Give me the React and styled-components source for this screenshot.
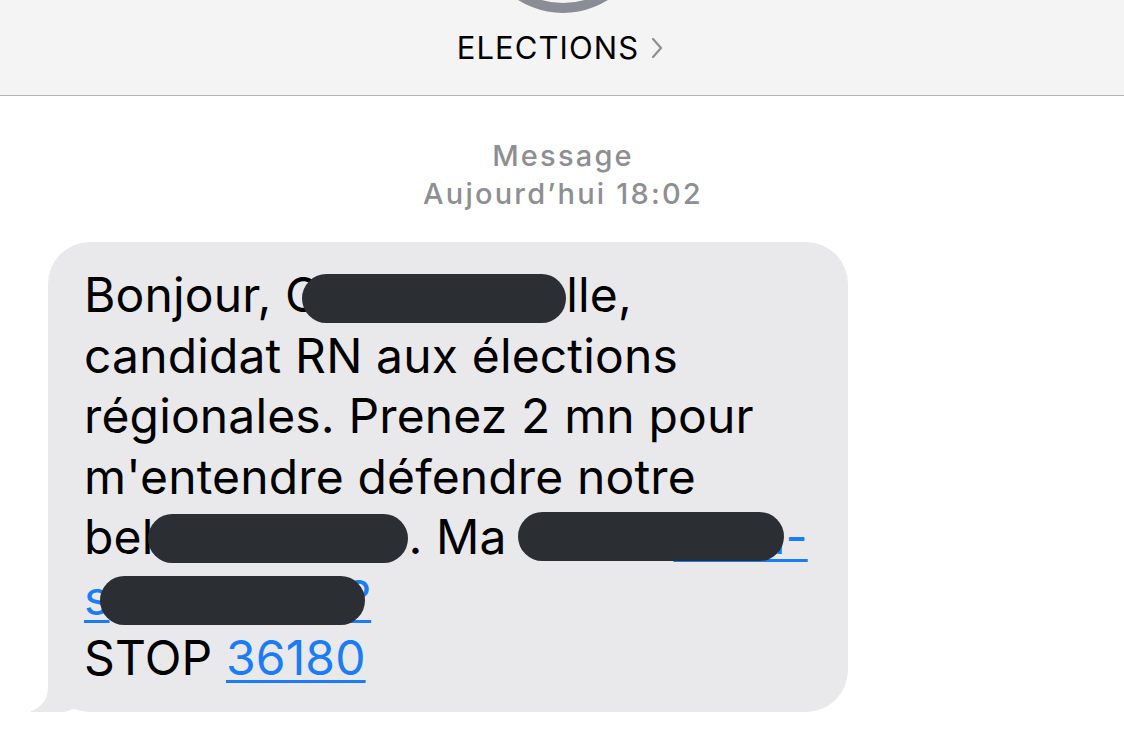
import React from "react";
import styled, {createGlobalStyle} from "styled-components";

const GlobalStyle = createGlobalStyle`
    html, body {
        margin: 0;
        padding: 0;
        background: #ffffff;
    }
    body {
        font-family: "Inter", "Liberation Sans", Arial, sans-serif;
        -webkit-font-smoothing: antialiased;
    }
`;

const Page = styled.div`
    width: 1124px;
    height: 755px;
    overflow: hidden;
    background: #ffffff;
`;

const Header = styled.header`
    height: 95px;
    background: #f4f4f4;
    border-bottom: 1px solid #b3b3b3;
    display: flex;
    flex-direction: column;
    align-items: center;
`;

const Ring = styled.svg`
    display: block;
    margin-left: 2px;
`;

const TitleRow = styled.div`
    display: flex;
    align-items: center;
    gap: 11px;
    margin-top: 16px;
    margin-right: 3px;
`;

const Title = styled.span`
    font-size: 31px;
    line-height: 36px;
    color: #000;
    letter-spacing: 1.1px;
`;

const Thread = styled.main`
    display: flex;
    flex-direction: column;
`;

const Stamp = styled.div`
    margin-top: 41px;
    text-align: center;
    color: #8e8e93;
    font-size: 29px;
    line-height: 38px;
    font-weight: 500;
    letter-spacing: 2.2px;
    padding-left: 2px;
`;

const Bubble = styled.div`
    position: relative;
    box-sizing: border-box;
    width: 800px;
    margin: 29px 0 0 48px;
    padding: 23px 38px 23px 36px;
    background: #e9e9eb;
    border-radius: 42px;
    color: #000;
    font-size: 48px;
    line-height: 60.5px;
    letter-spacing: 0.15px;

    &::before {
        content: "";
        position: absolute;
        left: -17px;
        bottom: 0;
        width: 52px;
        height: 50px;
        background: #e9e9eb;
        border-bottom-right-radius: 22px 20px;
    }
    &::after {
        content: "";
        position: absolute;
        left: -60px;
        bottom: 0;
        width: 60px;
        height: 50px;
        background: #ffffff;
        border-bottom-right-radius: 24px;
    }
`;

const Line = styled.div`
    white-space: nowrap;
`;

const Redact = styled.span`
    position: relative;
    z-index: 1;
    display: inline-block;
    width: ${props => props.w}px;
    height: 49px;
    margin-left: ${props => props.ml || 0}px;
    margin-right: ${props => props.mr || 0}px;
    vertical-align: ${props => props.drop || -10}px;
    border-radius: 25px;
    background: #2b2f33;
`;

const Link = styled.span`
    color: #1a7cf6;
    text-decoration: underline;
    text-decoration-thickness: 2.5px;
    text-underline-offset: 5px;
    margin-left: ${props => props.ml || 0}px;
`;

const Chevron = () => (
    <svg width="14" height="22" viewBox="0 0 14 22">
        <path d="M3 2 L11 11 L3 20" fill="none" stroke="#8e8e93" strokeWidth="2.2" strokeLinecap="round" strokeLinejoin="round"/>
    </svg>
);

const App = () => {
    return (
        <Page>
            <GlobalStyle/>
            <Header>
                <Ring width="180" height="14" viewBox="0 0 180 14">
                    <circle cx="90" cy="-71" r="79" fill="none" stroke="#8a8d95" strokeWidth="10"/>
                </Ring>
                <TitleRow>
                    <Title>ELECTIONS</Title>
                    <Chevron/>
                </TitleRow>
            </Header>
            <Thread>
                <Stamp>
                    <div>Message</div>
                    <div>Aujourd’hui 18:02</div>
                </Stamp>
                <Bubble>
                    <Line>Bonjour, C<Redact w={264} ml={-18} drop={-11}/>lle,</Line>
                    <Line>candidat RN aux élections</Line>
                    <Line>régionales. Prenez 2 mn pour</Line>
                    <Line>m'entendre défendre notre</Line>
                    <Line>bel<Redact w={260} ml={-5} drop={-9}/>. Ma <Redact w={266} ml={-2} drop={-7}/><Link ml={-111}>ation-</Link></Line>
                    <Line><Link>s<Redact w={265} ml={-10} mr={-18} drop={-10}/>?</Link></Line>
                    <Line>STOP <Link>36180</Link></Line>
                </Bubble>
            </Thread>
        </Page>
    );
};

export default App;
